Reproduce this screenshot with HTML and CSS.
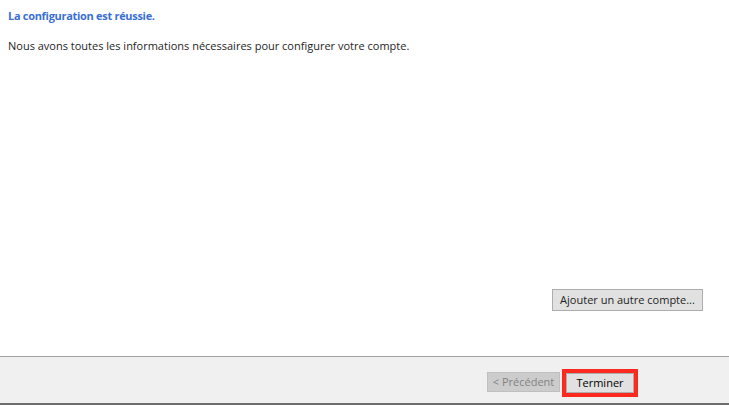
FILE: index.html
```html
<!DOCTYPE html>
<html lang="fr">
<head>
<meta charset="utf-8">
<link rel="stylesheet" href="styles.css">
</head>
<body>
<div class="window">
  <main class="content">
    <h1 class="title">La configuration est réussie.</h1>
    <p class="message">Nous avons toutes les informations nécessaires pour configurer votre compte.</p>
    <div class="spacer"></div>
    <div class="add-row">
      <button class="btn add">Ajouter un autre compte...</button>
    </div>
  </main>
  <footer class="footer">
    <button class="btn prev" disabled>&lt; Précédent</button>
    <button class="btn finish">Terminer</button>
  </footer>
</div>
</body>
</html>
```
FILE: styles.css
```css
* { box-sizing: border-box; }
html, body {
  margin: 0;
  padding: 0;
  width: 729px;
  height: 405px;
  background: #ffffff;
  font-family: "Open Sans", "Noto Sans", sans-serif;
  font-size: 11px;
  color: #1e1e1e;
  overflow: hidden;
}
.window {
  display: flex;
  flex-direction: column;
  height: 405px;
}
.content {
  height: 356px;
  display: flex;
  flex-direction: column;
  padding: 8px 26px 45px 8px;
}
.title {
  margin: 0;
  font-size: 11px;
  font-weight: 700;
  letter-spacing: -0.3px;
  line-height: 16px;
  color: #3a6fd5;
}
.message {
  margin: 14px 0 0;
  line-height: 16px;
}
.spacer { flex: 1; }
.add-row {
  display: flex;
  justify-content: flex-end;
}
.btn {
  font-family: inherit;
  font-size: 11px;
  color: #1e1e1e;
  background: #e1e1e1;
  border: 1px solid #adadad;
  padding: 0;
  line-height: 16px;
}
.add {
  width: 151px;
  height: 22px;
}
.footer {
  flex: 1;
  background: #f0f0f0;
  border-top: 1px solid #a0a0a0;
  border-bottom: 2px solid #6d6d6d;
  display: flex;
  align-items: flex-start;
  padding: 15px 95px 0 0;
  justify-content: flex-end;
  gap: 6px;
}
.prev {
  width: 73px;
  height: 20px;
  background: #cccccc;
  border-color: #bfbfbf;
  color: #838383;
}
.finish {
  width: 68px;
  height: 20px;
  margin-top: 1px;
  outline: 4px solid #ff2a1f;
  outline-offset: 0;
  color: #000000;
}
```
